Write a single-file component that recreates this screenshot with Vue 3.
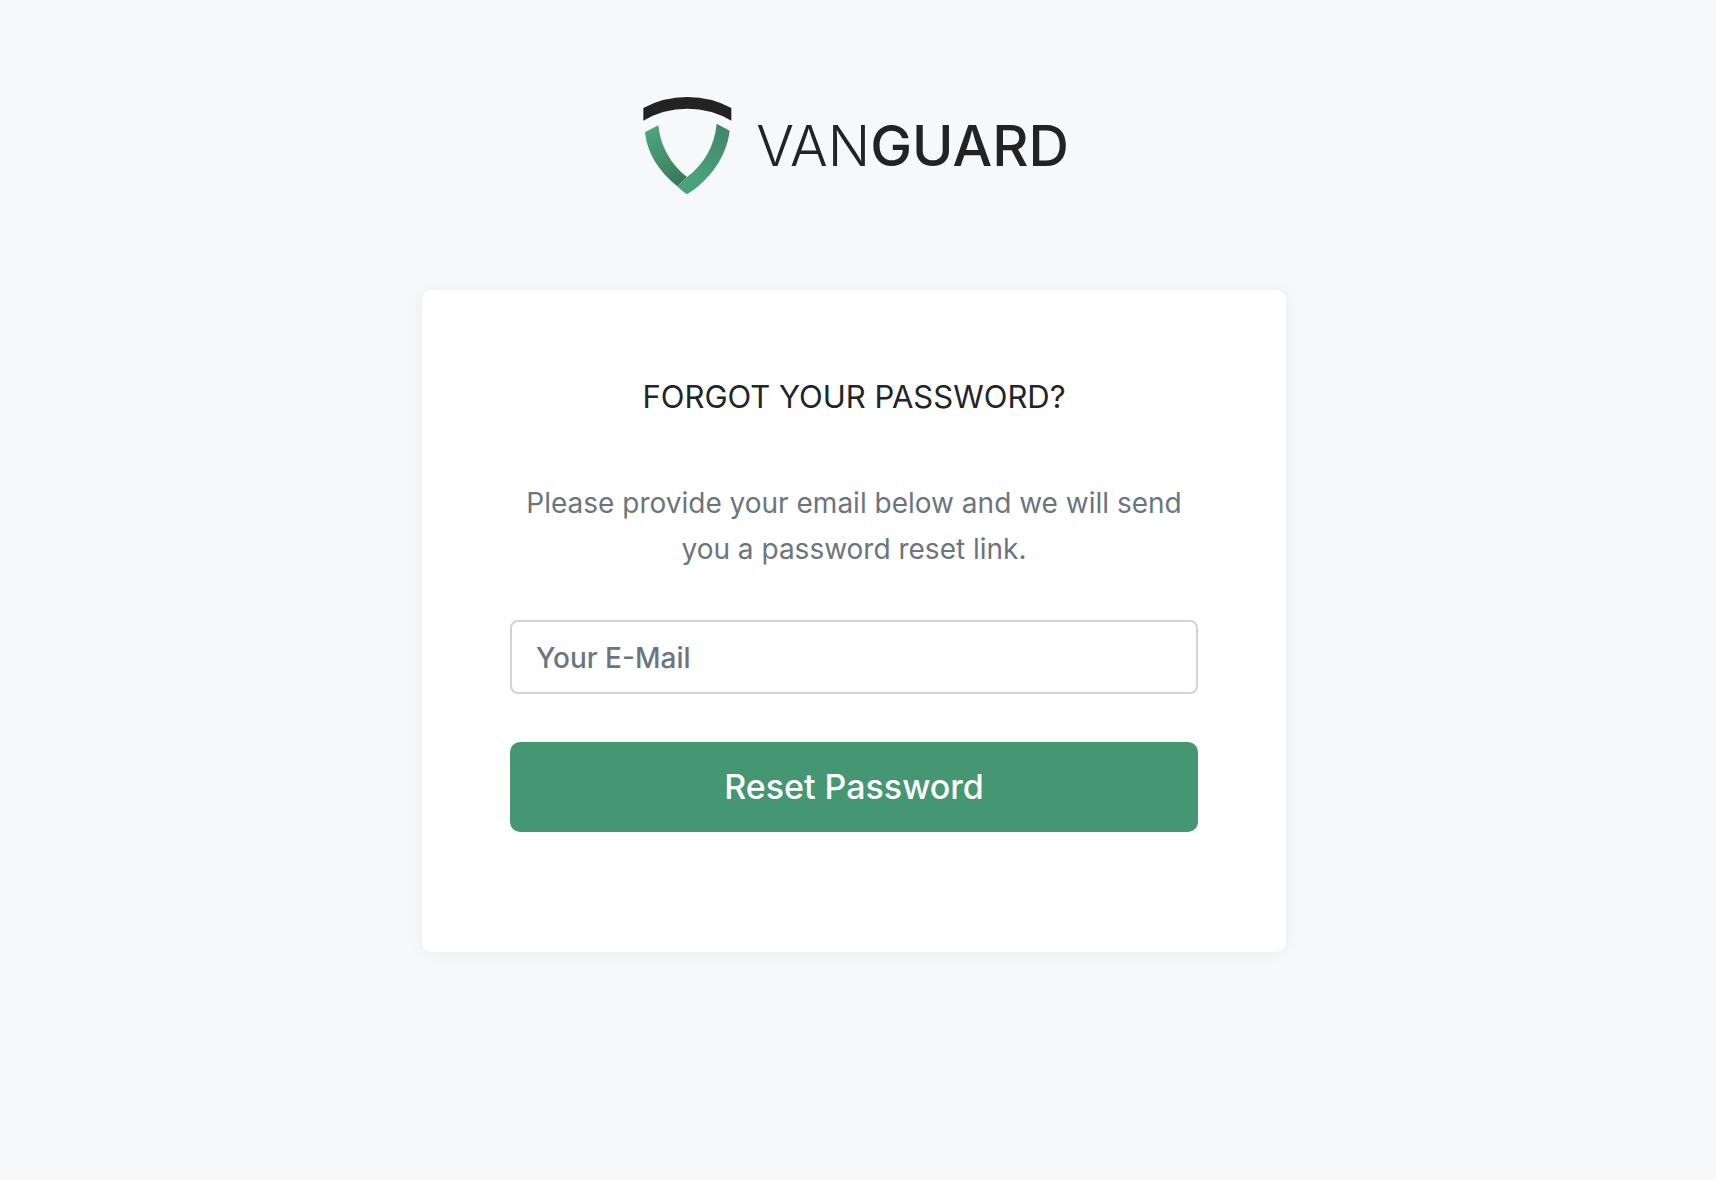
<script setup>
import { ref } from 'vue'

const email = ref('')
</script>

<template>
  <main class="page">
    <header class="brand">
      <svg class="shield" viewBox="45 48 267 297" aria-hidden="true">
        <defs>
          <linearGradient id="shield-left" gradientUnits="userSpaceOnUse" x1="70" y1="150" x2="165" y2="310">
            <stop offset="0" stop-color="#4ba37c" />
            <stop offset="0.55" stop-color="#438f6d" />
            <stop offset="1" stop-color="#387459" />
          </linearGradient>
          <linearGradient id="shield-right" gradientUnits="userSpaceOnUse" x1="285" y1="135" x2="175" y2="340">
            <stop offset="0" stop-color="#40876a" />
            <stop offset="0.8" stop-color="#4aa27b" />
          </linearGradient>
        </defs>
        <path fill="#232323" d="M46 84Q106 51 178 51T310 84V122Q250 86 178 86T46 122Z" />
        <path fill="url(#shield-left)" d="M51 157L91 136C97 200 130 255 177 291L148 319C92 274 57 219 51 157Z" />
        <path fill="url(#shield-right)" d="M266 131L305 152C297 226 248 299 177 343C166 336 157 328 148 319L177 291C229 252 260 196 266 131Z" />
      </svg>
      <span class="wordmark">VAN<b>GUARD</b></span>
    </header>

    <section class="card">
      <h1>FORGOT YOUR PASSWORD?</h1>
      <form @submit.prevent>
        <p>Please provide your email below and we will send you a password reset link.</p>
        <input v-model="email" type="email" name="email" aria-label="Your E-Mail" placeholder="Your E-Mail" />
        <button type="submit">Reset Password</button>
      </form>
    </section>
  </main>
</template>

<style>
body {
  margin: 0;
  background: #f7f8fa;
}
</style>

<style scoped>
.page {
  box-sizing: border-box;
  min-height: 100vh;
  padding: 96px 8px 96px 0;
  display: flex;
  flex-direction: column;
  align-items: center;
  font-family: Inter, "Liberation Sans", sans-serif;
  color: #212529;
}

.brand {
  display: flex;
  align-items: center;
  gap: 24px;
  margin-bottom: 95px;
  padding-left: 4px;
}

.shield {
  width: 89px;
  height: 99px;
}

.wordmark {
  font-size: 56px;
  line-height: 72px;
  font-weight: 300;
  color: #232323;
}

.wordmark b {
  font-weight: 500;
}

.card {
  box-sizing: border-box;
  width: 100%;
  max-width: 864px;
  padding: 88px 88px 120px;
  border-radius: 10px;
  background: #fff;
  box-shadow: 0 1px 15px rgba(0, 0, 0, 0.06);
  text-align: center;
}

h1 {
  margin: 0 0 64px;
  font-size: 31px;
  line-height: 38px;
  font-weight: 400;
}

form {
  display: flex;
  flex-direction: column;
}

p {
  margin: 0 0 48px;
  font-size: 28px;
  line-height: 46px;
  color: #6c757d;
}

input {
  box-sizing: border-box;
  height: 74px;
  margin: 0 0 48px;
  padding: 2px 24px 0;
  border: 2px solid #ced4da;
  border-radius: 8px;
  background: #fff;
  font: 500 28px/42px Inter, "Liberation Sans", sans-serif;
  color: #495057;
}

input::placeholder {
  color: #6c757d;
  opacity: 1;
}

button {
  height: 90px;
  padding: 0 32px;
  border: 0;
  border-radius: 10px;
  background: #459672;
  font: 500 34px/54px Inter, "Liberation Sans", sans-serif;
  color: #fff;
  cursor: pointer;
}
</style>
